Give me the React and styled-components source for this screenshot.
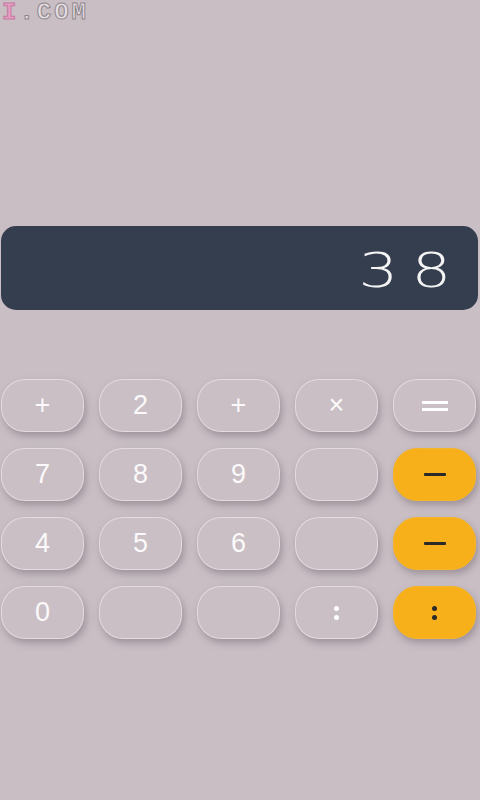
import React from 'react';
import styled, { createGlobalStyle } from 'styled-components';

const GlobalStyle = createGlobalStyle`
  html, body {
    margin: 0;
    padding: 0;
    background: #c8bec4;
  }
  body {
    font-family: 'Liberation Sans', Arial, sans-serif;
  }
`;

const Page = styled.div`
  width: 480px;
  height: 800px;
  box-sizing: border-box;
  padding: 0 4px 0 1px;
  background: #c8bec4;
  display: flex;
  flex-direction: column;
  overflow: hidden;
`;

const Watermark = styled.div`
  height: 226px;
  box-sizing: border-box;
  padding: 0 0 0 1px;
  font-family: 'Liberation Mono', monospace;
  font-weight: 700;
  font-size: 24px;
  letter-spacing: 3px;
  line-height: 26px;
  color: #e6dde2;
  -webkit-text-stroke: 1px #8f878c;

  span {
    color: #e79cc2;
    -webkit-text-stroke: 1px #c47aa0;
  }
`;

const Display = styled.div`
  height: 84px;
  border-radius: 15px;
  background: #353e4e;
  display: flex;
  align-items: center;
  justify-content: flex-end;
  gap: 23px;
  padding: 4px 31px 0 0;
  box-sizing: border-box;
  color: #f4f4f4;
  font-family: 'DejaVu Sans', 'Roboto', sans-serif;
  font-weight: 200;
  font-size: 48px;
  margin-right: -2px;
`;

const Digit = styled.span`
  display: inline-block;
  transform: scaleX(1.3);
`;

const Keypad = styled.div`
  margin-top: 69px;
  display: grid;
  grid-template-columns: repeat(5, 1fr);
  grid-auto-rows: 53px;
  column-gap: 15px;
  row-gap: 16px;
`;

const Key = styled.div`
  border-radius: 24px;
  background: ${p => (p.$accent ? '#f8b01a' : '#c9bfc5')};
  border: 1px solid ${p => (p.$accent ? '#f5b52a' : 'rgba(236, 228, 232, 0.75)')};
  box-shadow: 2px 4px 7px rgba(120, 105, 115, 0.5);
  display: flex;
  align-items: center;
  justify-content: center;
  color: ${p => (p.$accent ? '#2a2a2a' : '#fbf9fa')};
  font-family: 'Liberation Sans', Arial, sans-serif;
  font-size: 27px;
  font-weight: 400;
  box-sizing: border-box;
`;

const Dots = styled.span`
  display: flex;
  flex-direction: column;
  gap: 4px;

  i {
    display: block;
    width: 5px;
    height: 5px;
    border-radius: 50%;
    background: ${p => p.$color};
  }
`;

const Dash = styled.span`
  display: block;
  width: 22px;
  height: 3px;
  background: ${p => p.$color};
  border-radius: 1px;
`;

const Equals = styled.span`
  display: flex;
  flex-direction: column;
  gap: 4px;

  i {
    display: block;
    width: 26px;
    height: 3px;
    background: #fff;
  }
`;

const keys = [
  { label: '+' }, { label: '2' }, { label: '+' }, { label: '×' }, { kind: 'eq' },
  { label: '7' }, { label: '8' }, { label: '9' }, { label: '' }, { kind: 'dash', accent: true },
  { label: '4' }, { label: '5' }, { label: '6' }, { label: '' }, { kind: 'dash', accent: true },
  { label: '0' }, { label: '' }, { label: '' }, { kind: 'dots' }, { kind: 'dots', accent: true },
];

const renderLabel = k => {
  const color = k.accent ? '#2a2a2a' : '#ffffff';
  if (k.kind === 'eq') return <Equals><i /><i /></Equals>;
  if (k.kind === 'dash') return <Dash $color={color} />;
  if (k.kind === 'dots') return <Dots $color={color}><i /><i /></Dots>;
  return k.label;
};

export default function App() {
  return (
    <Page>
      <GlobalStyle />
      <Watermark><span>I</span>.COM</Watermark>
      <Display>
        <Digit>3</Digit>
        <Digit>8</Digit>
      </Display>
      <Keypad>
        {keys.map((k, i) => (
          <Key key={i} $accent={k.accent}>{renderLabel(k)}</Key>
        ))}
      </Keypad>
    </Page>
  );
}
